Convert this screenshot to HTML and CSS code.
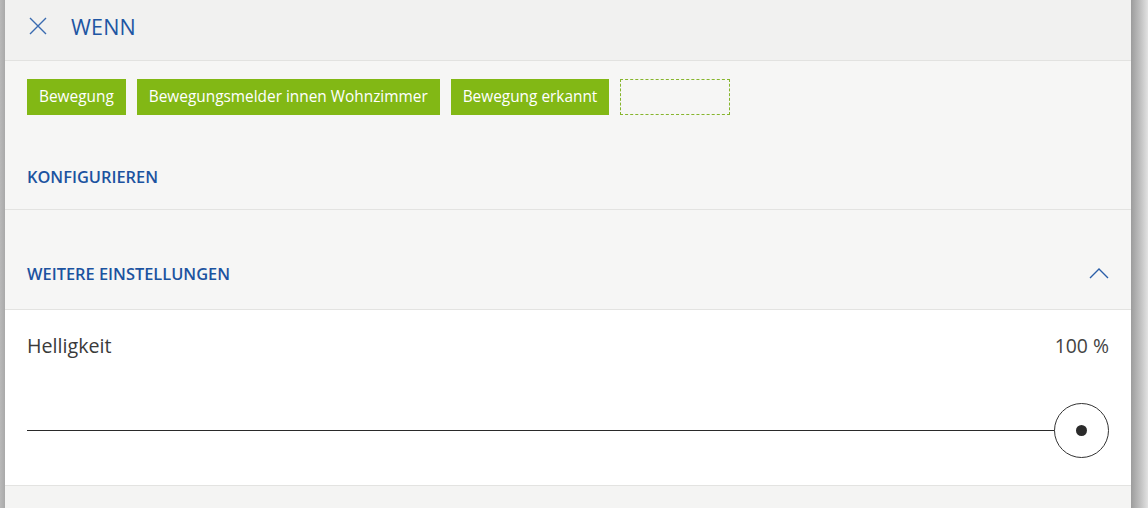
FILE: index.html
```html
<!DOCTYPE html>
<html lang="de">
<head>
<meta charset="utf-8">
<title>Wenn</title>
<link rel="stylesheet" href="styles.css">
</head>
<body>
<div class="frame">
  <div class="edge-left"></div>
  <main class="panel">
    <header class="head">
      <svg class="close" width="20" height="20" viewBox="0 0 20 20"><path d="M2 2 L18 18 M18 2 L2 18" stroke="#3a6bb0" stroke-width="1.4" fill="none"/></svg>
      <h1 class="title">WENN</h1>
    </header>
    <section class="tags">
      <span class="tag">Bewegung</span>
      <span class="tag">Bewegungsmelder innen Wohnzimmer</span>
      <span class="tag">Bewegung erkannt</span>
      <span class="tag-empty"></span>
    </section>
    <section class="row row-config">
      <span class="label">KONFIGURIEREN</span>
    </section>
    <section class="row row-more">
      <span class="label">WEITERE EINSTELLUNGEN</span>
      <svg class="chev" width="20" height="12" viewBox="0 0 20 12"><path d="M1 11 L10 2 L19 11" stroke="#2a5ea8" stroke-width="1.4" fill="none"/></svg>
    </section>
    <section class="bright">
      <div class="bright-head">
        <span class="bright-name">Helligkeit</span>
        <span class="bright-val">100 %</span>
      </div>
      <div class="slider">
        <div class="track"></div>
        <div class="knob"><span class="dot"></span></div>
      </div>
    </section>
    <div class="foot"></div>
  </main>
  <div class="edge-right"></div>
</div>
</body>
</html>
```
FILE: styles.css
```css
* { box-sizing: border-box; }
html, body { margin: 0; padding: 0; }
body {
  font-family: "Open Sans", "Noto Sans", sans-serif;
  background: #d9d9d9;
  width: 1148px;
  height: 508px;
  overflow: hidden;
}
.frame { display: flex; height: 508px; }
.edge-left { width: 5px; background: linear-gradient(to right, #b9b9b9, #a9a9a9); }
.edge-right { width: 17px; background: linear-gradient(to right, #9c9c9c, #c4c4c4 60%, #e2e2e2); }
.panel { width: 1126px; display: flex; flex-direction: column; background: #f6f6f5; }
.head {
  height: 61px;
  background: #f1f1f0;
  border-bottom: 1px solid #e2e2e0;
  display: flex;
  align-items: center;
  padding-left: 23px;
  padding-bottom: 8px;
}
.close { display: block; }
.title {
  margin: 0 0 0 23px;
  font-size: 21.5px;
  font-weight: 400;
  color: #1e56a3;
  letter-spacing: 0.2px;
}
.tags {
  display: flex;
  gap: 11px;
  padding: 18px 0 0 22px;
}
.tag {
  height: 36px;
  background: #82b815;
  color: #fff;
  font-size: 15.4px;
  line-height: 36px;
  padding: 0 12px;
  white-space: nowrap;
}
.tag-empty {
  width: 110px;
  height: 36px;
  border: 1px dashed #86b52c;
}
.row {
  display: flex;
  align-items: center;
  justify-content: space-between;
  padding: 0 22px;
  border-bottom: 1px solid #e3e3e1;
}
.row-config { height: 95px; padding-top: 29px; }
.row-more { height: 100px; padding-top: 27px; }
.label {
  font-size: 16.4px;
  font-weight: 600;
  color: #1c53a0;
}
.chev { display: block; }
.bright {
  background: #fff;
  height: 176px;
  border-bottom: 1px solid #e3e3e1;
  padding: 23px 22px 0 22px;
}
.bright-head { display: flex; justify-content: space-between; align-items: center; color: #3a3a3a; line-height: 26px; }
.bright-name { font-size: 19.7px; }
.bright-val { font-size: 19.4px; color: #444; }
.slider { display: flex; align-items: center; margin-top: 44px; height: 55px; }
.track { flex: 1; height: 1px; border-top: 1px solid #2a2a2a; }
.knob {
  width: 55px; height: 55px; border-radius: 50%;
  border: 1px solid #333; background: #fff;
  display: flex; align-items: center; justify-content: center;
  margin-left: -1px;
}
.dot { width: 11px; height: 11px; border-radius: 50%; background: #2b2b2b; }
.foot { flex: 1; background: #f4f4f3; }
```
